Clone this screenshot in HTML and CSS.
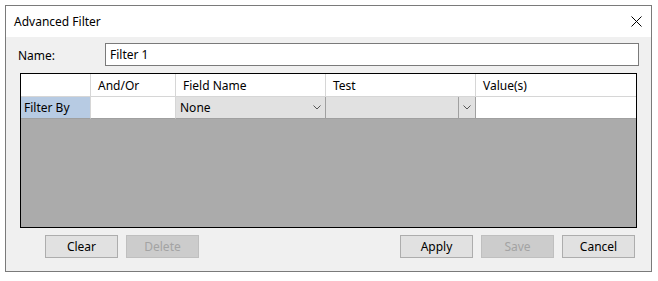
FILE: index.html
```html
<!DOCTYPE html>
<html lang="en">

<head>
    <meta charset="UTF-8">
    <title>Advanced Filter</title>

    <link rel="stylesheet" href="styles.css">

</head>

<body>
    <div class="dlg">
        <div class="titlebar">
            <span class="title">Advanced Filter</span>
            <svg class="close" width="11" height="11" viewBox="0 0 11 11">
                <path d="M0.5 0.5 L10.5 10.5 M10.5 0.5 L0.5 10.5" stroke="#000" stroke-width="1" fill="none" />
            </svg>
        </div>

        <div class="body">
            <div class="namerow">
                <label class="lbl">Name:</label>
                <div class="txt">Filter 1</div>
            </div>

            <div class="grd">
                <div class="hd first"></div>
                <div class="hd">And/Or</div>
                <div class="hd">Field Name</div>
                <div class="hd">Test</div>
                <div class="hd last">Value(s)</div>

                <div class="rowhd">Filter By</div>
                <div class="cell"></div>
                <div class="combo">
                    <span>None</span>
                    <svg class="chev" width="8" height="5" viewBox="0 0 8 5"><path d="M0.5 0.5 L4 4 L7.5 0.5" stroke="#555" fill="none" /></svg>
                </div>
                <div class="combo btned">
                    <span></span>
                    <div class="dropbtn">
                        <svg class="chev" width="8" height="5" viewBox="0 0 8 5"><path d="M0.5 0.5 L4 4 L7.5 0.5" stroke="#555" fill="none" /></svg>
                    </div>
                </div>
                <div class="cell last"></div>
            </div>

            <div class="btns">
                <button class="btn">Clear</button>
                <button class="btn off">Delete</button>
                <div class="spacer"></div>
                <button class="btn">Apply</button>
                <button class="btn off">Save</button>
                <button class="btn">Cancel</button>
            </div>
        </div>
    </div>
</body>

</html>
```

FILE: styles.css
```css
body {
    margin: 0;
    background: #fff;
    font-family: "Noto Sans", "Open Sans", sans-serif;
    font-size: 12px;
    color: #000;
}

.dlg {
    margin: 5px 0 0 5px;
    width: 647px;
    height: 267px;
    box-sizing: border-box;
    border: 1px solid #7a7a7a;
    display: flex;
    flex-direction: column;
}

.titlebar {
    height: 31px;
    background: #fff;
    display: flex;
    align-items: center;
    padding: 0 9px 0 8px;
    justify-content: space-between;
}

.title {
    padding-bottom: 1px;
}

.close {
    display: block;
    margin-bottom: 1px;
}

.body {
    flex: 1;
    background: #f0f0f0;
    padding: 6px 12px 0 12px;
}

.namerow {
    display: flex;
    align-items: center;
    height: 23px;
}

.lbl {
    width: 87px;
    padding-top: 2px;
}

.txt {
    flex: 1;
    height: 23px;
    box-sizing: border-box;
    border: 1px solid #7a7a7a;
    background: #fff;
    padding: 2px 4px;
    line-height: 17px;
}

.grd {
    margin: 7px 2px 0 2px;
    height: 155px;
    box-sizing: border-box;
    border: 1px solid #000;
    background: #ababab;
    display: grid;
    grid-template-columns: 70px 85px 150px 150px 1fr;
    grid-template-rows: 23px 22px;
    align-content: start;
}

.hd {
    background: #fff;
    border-right: 1px solid #d6d6d6;
    border-bottom: 1px solid #d6d6d6;
    padding: 3px 0 0 7px;
    line-height: 17px;
}

.hd.last,
.cell.last {
    border-right: 0;
}

.rowhd {
    background: #b7cbe3;
    border-right: 1px solid #d6d6d6;
    border-bottom: 1px solid #a0a0a0;
    padding: 2px 0 0 3px;
    line-height: 17px;
}

.cell {
    background: #fff;
    border-right: 1px solid #d6d6d6;
    border-bottom: 1px solid #a0a0a0;
}

.combo {
    background: #e1e1e1;
    border: 1px solid #a0a0a0;
    border-top: 0;
    border-left: 0;
    display: flex;
    align-items: center;
    justify-content: space-between;
    padding-left: 4px;
    padding-right: 4px;
    line-height: 17px;
}

.combo.btned {
    padding-right: 0;
}

.dropbtn {
    width: 16px;
    height: 100%;
    border-left: 1px solid #a0a0a0;
    display: flex;
    align-items: center;
    justify-content: center;
}

.chev {
    display: block;
}

.btns {
    display: flex;
    gap: 9px;
    margin-top: 7px;
    padding: 0 5px 0 27px;
}

.spacer {
    flex: 1;
}

.btn {
    width: 73px;
    height: 23px;
    box-sizing: border-box;
    border: 1px solid #adadad;
    background: #e1e1e1;
    font-family: inherit;
    font-size: 12px;
    color: #000;
    padding: 0;
    margin: 0 -1px 0 0;
}

.btn.off {
    background: #cccccc;
    border-color: #bfbfbf;
    color: #a3a3a3;
}
```
